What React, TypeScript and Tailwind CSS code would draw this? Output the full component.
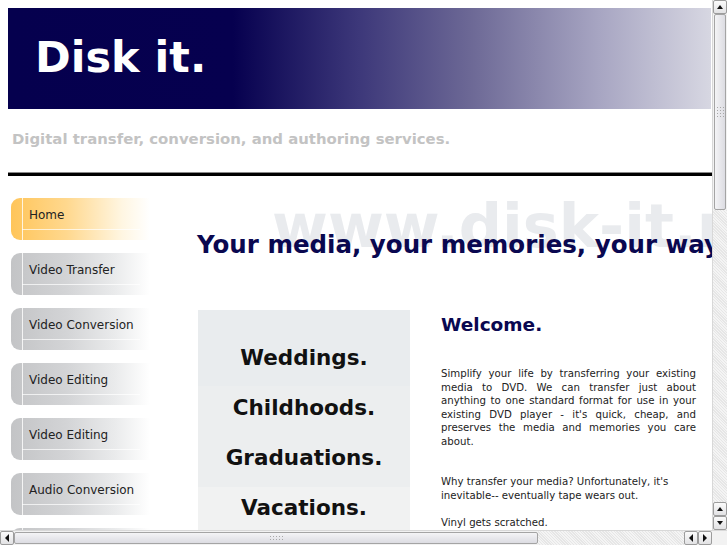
import React from 'react';

const navItems = [
  { label: 'Home', active: true },
  { label: 'Video Transfer' },
  { label: 'Video Conversion' },
  { label: 'Video Editing' },
  { label: 'Video Editing' },
  { label: 'Audio Conversion' },
  { label: 'DVD Authoring' },
];

const font = "font-['DejaVu_Sans',Verdana,sans-serif]";

function NavButton({ label, active }: { label: string; active?: boolean }) {
  return (
    <div
      className={`relative h-[42px] w-[139px] shrink-0 rounded-l-[9px] ${
        active
          ? 'bg-[linear-gradient(to_right,#ffc55a_0%,#ffd88e_40%,#fff6e2_80%,#ffffff_100%)]'
          : 'bg-[linear-gradient(to_right,#c3c4c6_0%,#d3d4d6_40%,#eaebec_75%,#ffffff_100%)]'
      }`}
    >
      <div className="absolute left-[11px] top-0 bottom-0 w-px bg-white/80" />
      <div className="absolute left-[11px] right-[10px] bottom-[10px] h-px bg-white/70" />
      <span className="absolute left-[18px] top-[10px] text-[12px] leading-[15px] text-[#222]">{label}</span>
    </div>
  );
}

function Arrow({ dir }: { dir: 'up' | 'down' | 'left' | 'right' }) {
  const pts = {
    up: '1,5 4,1 7,5',
    down: '1,1 4,5 7,1',
    left: '5,0 1,4 5,8',
    right: '1,0 5,4 1,8',
  }[dir];
  const vertical = dir === 'up' || dir === 'down';
  return (
    <svg width={vertical ? 8 : 6} height={vertical ? 6 : 8} viewBox={vertical ? '0 0 8 6' : '0 0 6 8'}>
      <polygon points={pts} fill="#111" />
    </svg>
  );
}

function ScrollButton({ dir }: { dir: 'up' | 'down' | 'left' | 'right' }) {
  return (
    <div className="flex items-center justify-center w-[14px] h-[14px] shrink-0 rounded-[2px] border border-[#9c9c9c] bg-[linear-gradient(#fbfbfb,#e2e2e4)]">
      <Arrow dir={dir} />
    </div>
  );
}

function Grip({ vertical }: { vertical?: boolean }) {
  const count = vertical ? 12 : 10;
  return (
    <div className={`grid gap-[2px] ${vertical ? 'grid-cols-3' : 'grid-cols-5'}`}>
      {Array.from({ length: count }).map((_, i) => (
        <div key={i} className="w-px h-px bg-[#a8a8a8]" />
      ))}
    </div>
  );
}

export default function App() {
  return (
    <div className={`w-[727px] h-[545px] overflow-hidden flex flex-col bg-white ${font}`}>
      <div className="flex flex-1 min-h-0">
        {/* page viewport */}
        <div className="flex-1 overflow-hidden">
          <div className="w-[900px] p-2">
            {/* banner */}
            <div className="h-[101px] w-[703px] bg-[linear-gradient(to_right,#05004e_0%,#06004f_32%,#3d387a_50%,#6d6996_66%,#a7a5c2_84%,#d7d7e2_100%)] flex items-center pl-[27px] pb-[3px]">
              <span className="text-white font-bold text-[43px] leading-none">Disk it.</span>
            </div>
            {/* tagline */}
            <div className="h-[63px] pt-[18px] pl-1">
              <span className="text-[14.9px] font-bold text-[#c3c3c3] leading-[18px]">
                Digital transfer, conversion, and authoring services.
              </span>
            </div>
            <div className="w-[704px] border-t border-[#8a8a8a] h-[4px] bg-black" />

            <div className="flex">
              {/* nav */}
              <div className="flex flex-col gap-[13px] pt-[22px] pl-[3px] w-[189px] shrink-0">
                {navItems.map((n, i) => (
                  <NavButton key={i} label={n.label} active={n.active} />
                ))}
              </div>

              {/* main */}
              <div className="flex flex-col">
                <div className="relative h-[134px]">
                  <div className="absolute left-[75px] top-[20px] whitespace-nowrap text-[60.5px] font-bold leading-[60px] text-[#e9ebee]">
                    www.disk-it.net
                  </div>
                  <div className="absolute left-0 top-[55px] whitespace-nowrap text-[24.5px] font-bold leading-[28px] text-[#0a0850]">
                    Your media, your memories, your way.
                  </div>
                </div>

                <div className="flex gap-[31px]">
                  <div className="w-[212px] ml-px flex flex-col text-[21.5px] font-bold text-[#111] text-center">
                    <div className="bg-[#e9ecee] pt-[34px] h-[76px] leading-[28px]">Weddings.</div>
                    <div className="bg-[#eceeef] h-[101px] flex flex-col pt-[8px] gap-[22px] leading-[28px]">
                      <div>Childhoods.</div>
                      <div>Graduations.</div>
                    </div>
                    <div className="bg-[#f1f2f2] h-[60px] pt-[7px] leading-[28px]">Vacations.</div>
                  </div>

                  <div className="w-[255px] pt-[4px]">
                    <div className="text-[18.5px] font-bold text-[#0a0850] leading-[22px]">Welcome.</div>
                    <p className="mt-[31px] text-[10.2px] leading-[13.5px] text-[#222] text-justify">
                      Simplify your life by transferring your existing media to DVD. We can transfer just about
                      anything to one standard format for use in your existing DVD player - it's quick, cheap, and
                      preserves the media and memories you care about.
                    </p>
                    <p className="mt-[27px] text-[10.2px] leading-[13.5px] text-[#222]">
                      Why transfer your media? Unfortunately, it's inevitable-- eventually tape wears out.
                    </p>
                    <p className="mt-[13.5px] text-[10.2px] leading-[13.5px] text-[#222]">Vinyl gets scratched.</p>
                  </div>
                </div>
              </div>
            </div>
          </div>
        </div>

        {/* vertical scrollbar */}
        <div className="w-[15px] flex flex-col bg-[#f2f2f2] border-l border-[#d8d8d8]">
          <ScrollButton dir="up" />
          <div className="h-[196px] mx-px rounded-[2px] border border-[#a4a4a4] bg-[linear-gradient(to_right,#f4f4f6,#dcdce2)] flex items-center justify-center">
            <Grip vertical />
          </div>
          <div className="flex-1 bg-[repeating-linear-gradient(45deg,#f4f4f4_0px,#f4f4f4_1px,#e6e6e6_1px,#e6e6e6_2px)]" />
          <ScrollButton dir="up" />
          <ScrollButton dir="down" />
        </div>
      </div>

      {/* horizontal scrollbar */}
      <div className="h-[15px] flex bg-[#f2f2f2] border-t border-[#d8d8d8]">
        <ScrollButton dir="left" />
        <div className="w-[524px] my-px rounded-[2px] border border-[#a4a4a4] bg-[linear-gradient(#f4f4f6,#dcdce2)] flex items-center justify-center">
          <Grip />
        </div>
        <div className="flex-1 bg-[repeating-linear-gradient(45deg,#f4f4f4_0px,#f4f4f4_1px,#e6e6e6_1px,#e6e6e6_2px)]" />
        <ScrollButton dir="left" />
        <ScrollButton dir="right" />
        <div className="w-[15px]" />
      </div>
    </div>
  );
}
